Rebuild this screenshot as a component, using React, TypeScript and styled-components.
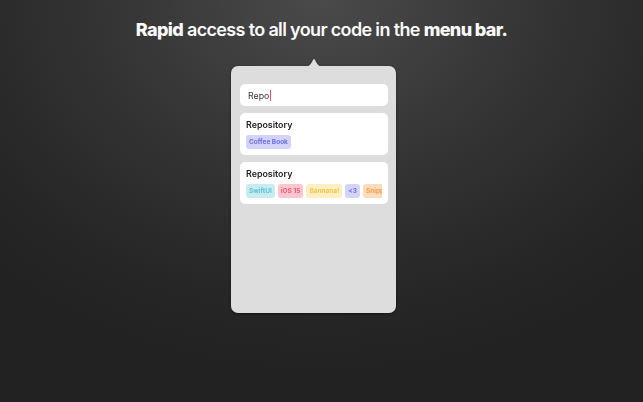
import React from "react";
import styled, { createGlobalStyle } from "styled-components";

const Global = createGlobalStyle`
  html, body { margin: 0; padding: 0; height: 100%; }
  body {
    width: 643px; height: 402px; overflow: hidden;
    background: radial-gradient(ellipse 75% 95% at 50% 0%, #4a4a4a 0%, #343434 45%, #262626 80%, #222 100%);
    font-family: Inter, "Noto Sans", sans-serif;
    -webkit-font-smoothing: antialiased;
  }
  #root { height: 100%; }
`;

const Page = styled.div`
  height: 100%;
  display: flex;
  flex-direction: column;
  align-items: center;
`;

const Headline = styled.h1`
  margin: 18px 0 0;
  font-size: 18px;
  line-height: 23px;
  font-weight: 600;
  color: #fbfbfb;
  letter-spacing: -0.65px;
  b { font-weight: 800; }
`;

const Popover = styled.div`
  margin-top: 17px;
  margin-right: 16px;
  display: flex;
  flex-direction: column;
  align-items: center;
  filter: drop-shadow(0 1px 1.5px rgba(0, 0, 0, 0.45));
`;

const Arrow = styled.svg`
  display: block;
  margin-bottom: -1px;
`;

const Panel = styled.div`
  width: 165px;
  height: 247px;
  box-sizing: border-box;
  background: #dddddd;
  border-radius: 7px;
  padding: 18px 8px 0 9px;
  display: flex;
  flex-direction: column;
  gap: 7px;
`;

const Search = styled.div`
  height: 22px;
  background: #fff;
  border-radius: 5px;
  display: flex;
  align-items: center;
  padding-left: 8px;
  font-size: 8.8px;
  color: #333;
`;

const Caret = styled.span`
  display: inline-block;
  width: 1px;
  height: 11px;
  background: #e2506c;
  margin-left: 0.5px;
`;

const Card = styled.div`
  background: #fff;
  border-radius: 5px;
  padding: 5px 6px 6px;
  display: flex;
  flex-direction: column;
  gap: 4px;
`;

const Title = styled.div`
  font-size: 8.9px;
  line-height: 12px;
  font-weight: 600;
  color: #222;
  padding-top: 1px;
`;

const Tags = styled.div`
  display: flex;
  gap: 3px;
  overflow: hidden;
`;

const Tag = styled.span<{ $bg: string; $fg: string }>`
  flex: none;
  height: 14px;
  display: flex;
  align-items: center;
  padding: 0 3px;
  border-radius: 3px;
  background: ${(p) => p.$bg};
  color: ${(p) => p.$fg};
  font-size: 6.5px;
  font-weight: 700;
`;

const tags1 = [{ t: "Coffee Book", bg: "#d2d2fa", fg: "#6d6de0" }];
const tags2 = [
  { t: "SwiftUI", bg: "#c9ecf1", fg: "#5cc3d2" },
  { t: "iOS 15", bg: "#fcc6cf", fg: "#e85a70" },
  { t: "Bannana!", bg: "#fdefc4", fg: "#f3c64a" },
  { t: "<3", bg: "#d4d4f9", fg: "#7070e0" },
  { t: "Snippets", bg: "#fddbbd", fg: "#f5a04c" },
];

export default function App() {
  return (
    <>
      <Global />
      <Page>
        <Headline>
          <b>Rapid</b> access to all your code in the <b>menu bar.</b>
        </Headline>
        <Popover>
          <Arrow width="18" height="9" viewBox="0 0 18 9">
            <path d="M0 9 C4 9 6 6 8 2 Q9 0 10 2 C12 6 14 9 18 9 Z" fill="#dddddd" />
          </Arrow>
          <Panel>
            <Search>
              Repo<Caret />
            </Search>
            <Card>
              <Title>Repository</Title>
              <Tags>
                {tags1.map((x) => (
                  <Tag key={x.t} $bg={x.bg} $fg={x.fg}>{x.t}</Tag>
                ))}
              </Tags>
            </Card>
            <Card>
              <Title>Repository</Title>
              <Tags>
                {tags2.map((x) => (
                  <Tag key={x.t} $bg={x.bg} $fg={x.fg}>{x.t}</Tag>
                ))}
              </Tags>
            </Card>
          </Panel>
        </Popover>
      </Page>
    </>
  );
}
